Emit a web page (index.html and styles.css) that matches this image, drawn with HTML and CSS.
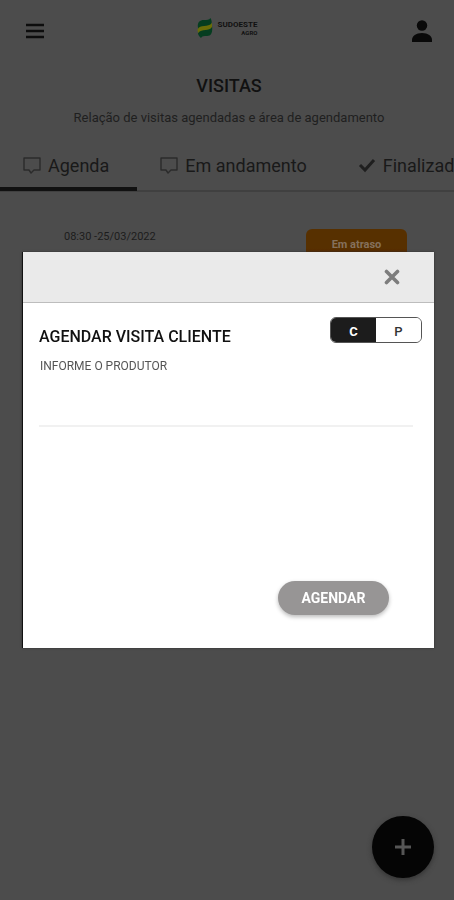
FILE: index.html
```html
<!DOCTYPE html>
<html lang="pt-BR">
<head>
<meta charset="utf-8">
<meta name="viewport" content="width=device-width, initial-scale=1">
<title>Visitas</title>
<link rel="stylesheet" href="styles.css">
</head>
<body>
<header class="topbar">
  <button class="icon-button" type="button" aria-label="Menu">
    <svg width="18" height="16" viewBox="0 0 18 16"><path d="M0 2h18M0 8h18M0 14h18" stroke="#0d0d0d" stroke-width="2.4"/></svg>
  </button>
  <a class="brand" href="#">
    <svg width="16" height="20" viewBox="0 0 16 20">
      <path d="M1 10C0 4 3 2 7 2c3 0 5 0 6.500-2C15 3 15 5 14 7c-3 5-10 0-13 6z" fill="#053d20"/>
      <path d="M1 15c3-6 11-1 14-8 1 8-1 11-5 11-3 0-5 0-6 2-2-2-3-3-3-5z" fill="#053d20"/>
      <path d="M.500 11.500C3 6 11 10 15 5v4C12 14 5 10 1 15z" fill="#6a6d08"/>
    </svg>
    <span class="brand-text"><span class="brand-name">SUDOESTE</span><span class="brand-sub">AGRO</span></span>
  </a>
  <button class="icon-button" type="button" aria-label="Perfil">
    <svg width="20" height="22" viewBox="0 0 20 22"><circle cx="10" cy="5.500" r="5.200" fill="#090909"/><path d="M0 22v-2c0-4 4-7 10-7s10 3 10 7v2z" fill="#090909"/></svg>
  </button>
</header>

<main>
  <h1 class="title">VISITAS</h1>
  <p class="subtitle">Relação de visitas agendadas e área de agendamento</p>
  <nav class="tabs">
    <a class="tab tab-active" href="#agenda">
      <svg width="18" height="18" viewBox="0 0 18 18"><path d="M1 1h16v12h-6l-3 3-2-3H1z" fill="none" stroke="#2b2b2b" stroke-width="1.400" stroke-linejoin="round"/></svg>Agenda</a>
    <a class="tab" href="#andamento">
      <svg width="18" height="18" viewBox="0 0 18 18"><path d="M1 1h16v12h-6l-3 3-2-3H1z" fill="none" stroke="#2b2b2b" stroke-width="1.400" stroke-linejoin="round"/></svg>Em andamento</a>
    <a class="tab" href="#finalizadas">
      <svg width="18" height="18" viewBox="0 0 18 18"><path d="M2 8l5 5 9-10" fill="none" stroke="#1f1f1f" stroke-width="3"/></svg>Finalizadas</a>
  </nav>
  <article class="visit">
    <time class="visit-time">08:30 -25/03/2022</time>
    <span class="badge">Em atraso</span>
  </article>
</main>

<button class="fab" type="button" aria-label="Nova visita">
  <svg width="16" height="16" viewBox="0 0 16 16"><path d="M8 0v16M0 8h16" stroke="#565656" stroke-width="3"/></svg>
</button>

<div class="backdrop">
  <section class="modal" role="dialog" aria-modal="true" aria-labelledby="modal-title">
    <div class="modal-header">
      <button class="icon-button" type="button" aria-label="Fechar">
        <svg width="16" height="16" viewBox="0 0 16 16"><path d="M2.500 2.500l11 11M13.500 2.500l-11 11" stroke="#7d7d7d" stroke-width="3.600" stroke-linecap="round"/></svg>
      </button>
    </div>
    <form class="modal-body">
      <div class="heading-row">
        <h2 class="modal-title" id="modal-title">AGENDAR VISITA CLIENTE</h2>
        <div class="switch">
          <button class="switch-option switch-on" type="button" aria-pressed="true">C</button>
          <button class="switch-option" type="button" aria-pressed="false">P</button>
        </div>
      </div>
      <label class="field-label" for="produtor">INFORME O PRODUTOR</label>
      <input class="field" id="produtor" type="text">
      <button class="submit" type="button">AGENDAR</button>
    </form>
  </section>
</div>
</body>
</html>
```
FILE: styles.css
```css
* {
  box-sizing: border-box;
}

body {
  margin: 0;
  min-height: 100vh;
  overflow-x: hidden;
  background: #4c4c4c;
  color: #111;
  font-family: Roboto, "Liberation Sans", sans-serif;
}

button {
  font-family: inherit;
  cursor: pointer;
}

svg {
  display: block;
  flex: none;
}

.icon-button {
  padding: 0;
  border: 0;
  background: none;
}

.topbar {
  display: flex;
  align-items: center;
  justify-content: space-between;
  height: 62px;
  padding: 0 22px 0 26px;
}

.brand {
  display: flex;
  align-items: center;
  gap: 5px;
  padding: 0 2px 6px 0;
  color: #111;
  text-decoration: none;
}

.brand-text {
  display: flex;
  flex-direction: column;
  align-items: flex-end;
  font-weight: 700;
}

.brand-name {
  font-size: 8px;
  line-height: 9px;
}

.brand-sub {
  font-size: 6px;
  line-height: 8px;
}

.title {
  margin: 14px 0 0;
  padding-left: 4px;
  font-size: 18px;
  font-weight: 500;
  line-height: 20px;
  text-align: center;
}

.subtitle {
  margin: 14px 0 0;
  padding-left: 4px;
  color: #1f1f1f;
  font-size: 13px;
  line-height: 16px;
  text-align: center;
}

.tabs {
  display: flex;
  height: 52px;
  margin-top: 14px;
  padding-bottom: 1px;
  overflow: hidden;
  box-shadow: inset 0 -2px #404040;
}

.tab {
  display: flex;
  flex: none;
  align-items: center;
  gap: 7px;
  padding: 4px 28px 0 23px;
  border-bottom: 4px solid transparent;
  color: #191919;
  font-size: 18px;
  text-decoration: none;
}

.tab-active {
  border-bottom-color: #111;
}

.visit {
  display: flex;
  align-items: flex-start;
  justify-content: space-between;
  padding: 37px 47px 0 64px;
}

.visit-time {
  color: #1c1c1c;
  font-size: 11px;
  line-height: 16px;
}

.badge {
  width: 101px;
  height: 32px;
  border-radius: 6px 6px 0 0;
  background: linear-gradient(#573000 60%, #5a2000);
  color: #85705c;
  font-size: 11px;
  font-weight: 700;
  line-height: 32px;
  text-align: center;
}

.fab {
  position: fixed;
  right: 20px;
  bottom: 22px;
  display: grid;
  place-items: center;
  width: 62px;
  height: 62px;
  padding: 0;
  border: 0;
  border-radius: 50%;
  background: #050505;
  box-shadow: 0 2px 5px #333;
}

.backdrop {
  position: fixed;
  inset: 0;
  display: flex;
  align-items: center;
  padding: 0 20px 0 22px;
  pointer-events: none;
}

.modal {
  flex: 1;
  border-left: 1px solid #111;
  background: #fff;
  box-shadow: 0 0 2px #2c2c2c;
  pointer-events: auto;
}

.modal-header {
  display: flex;
  align-items: center;
  justify-content: flex-end;
  height: 51px;
  padding-right: 34px;
  border-bottom: 1px solid #bdbdbd;
  background: #eaeaea;
}

.modal-body {
  display: flex;
  flex-direction: column;
  padding: 14px 12px 33px 16px;
}

.heading-row {
  display: flex;
  align-items: flex-start;
  justify-content: space-between;
}

.modal-title {
  margin: 10px 0 0;
  color: #111;
  font-size: 16px;
  font-weight: 500;
  line-height: 20px;
}

.switch {
  display: flex;
  width: 92px;
  height: 26px;
  overflow: hidden;
  border: 1px solid #555;
  border-radius: 6px;
}

.switch-option {
  flex: 1;
  padding: 2px 0 0;
  border: 0;
  background: #fff;
  color: #333;
  font-size: 13px;
  font-weight: 500;
}

.switch-on {
  background: #1c1c1c;
  color: #fff;
  font-weight: 700;
}

.field-label {
  margin: 11px 0 0 1px;
  color: #555;
  font-size: 12px;
  line-height: 16px;
}

.field {
  height: 53px;
  margin-right: 9px;
  padding: 0;
  border: 0;
  border-bottom: 2px solid #f1f1f1;
  outline: 0;
  background: none;
  font: inherit;
}

.submit {
  align-self: flex-end;
  width: 111px;
  height: 34px;
  margin: 154px 33px 0 0;
  padding: 0;
  border: 0;
  border-radius: 17px;
  background: #979595;
  box-shadow: 0 2px 4px #bbb;
  color: #fff;
  font-size: 14px;
  font-weight: 700;
}
```
